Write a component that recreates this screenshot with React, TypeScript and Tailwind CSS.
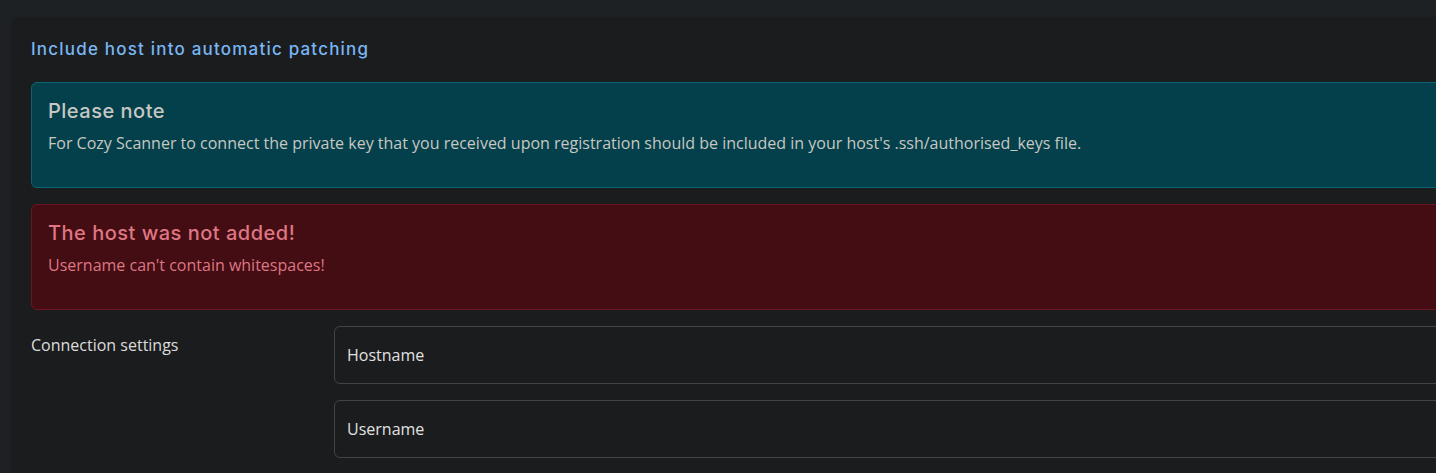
type AlertProps = {
	title: string;
	text: string;
	tone: "info" | "danger";
};

function Alert({ title, text, tone }: AlertProps) {
	const box =
		tone === "info"
			? "border-[#0b6474] bg-[#04404c] text-[#c7c8c1]"
			: "border-[#6b1520] bg-[#430d13] text-[#df7682]";

	return (
		<div className={`mb-4 rounded-md border px-4 pt-4 pb-8 ${box}`}>
			<h4 className="mb-2 font-['Inter',sans-serif] text-[20px] font-medium leading-[24px] tracking-[0.5px]">
				{title}
			</h4>
			<p className="text-[16px] leading-[24px]">{text}</p>
		</div>
	);
}

function Field({ placeholder }: { placeholder: string }) {
	return (
		<input
			type="text"
			placeholder={placeholder}
			className="h-[58px] w-full rounded-md border border-[#424447] bg-[#1b1c1e] px-3 text-[16px] text-[#e1e1e1] outline-none placeholder:text-[#e1e1e1]"
		/>
	);
}

export default function App() {
	return (
		<div className="h-[473px] w-full overflow-hidden bg-[#1e2124] pt-[17px] pl-[11px] font-['Open_Sans',sans-serif]">
			<div className="w-[1900px] rounded-md bg-[#1b1c1e] px-5 pt-5 pb-8">
				<h5 className="mb-[21px] font-['Inter',sans-serif] text-[17px] font-medium leading-[24px] tracking-[1.2px] text-[#78b6f4]">
					Include host into automatic patching
				</h5>

				<Alert
					tone="info"
					title="Please note"
					text="For Cozy Scanner to connect the private key that you received upon registration should be included in your host's .ssh/authorised_keys file."
				/>

				<Alert
					tone="danger"
					title="The host was not added!"
					text="Username can't contain whitespaces!"
				/>

				<div className="flex">
					<label className="w-[303px] shrink-0 pt-[7px] text-[16px] leading-[24px] text-[#dcdcdc]">
						Connection settings
					</label>
					<div className="flex flex-1 flex-col gap-4">
						<Field placeholder="Hostname" />
						<Field placeholder="Username" />
					</div>
				</div>
			</div>
		</div>
	);
}
